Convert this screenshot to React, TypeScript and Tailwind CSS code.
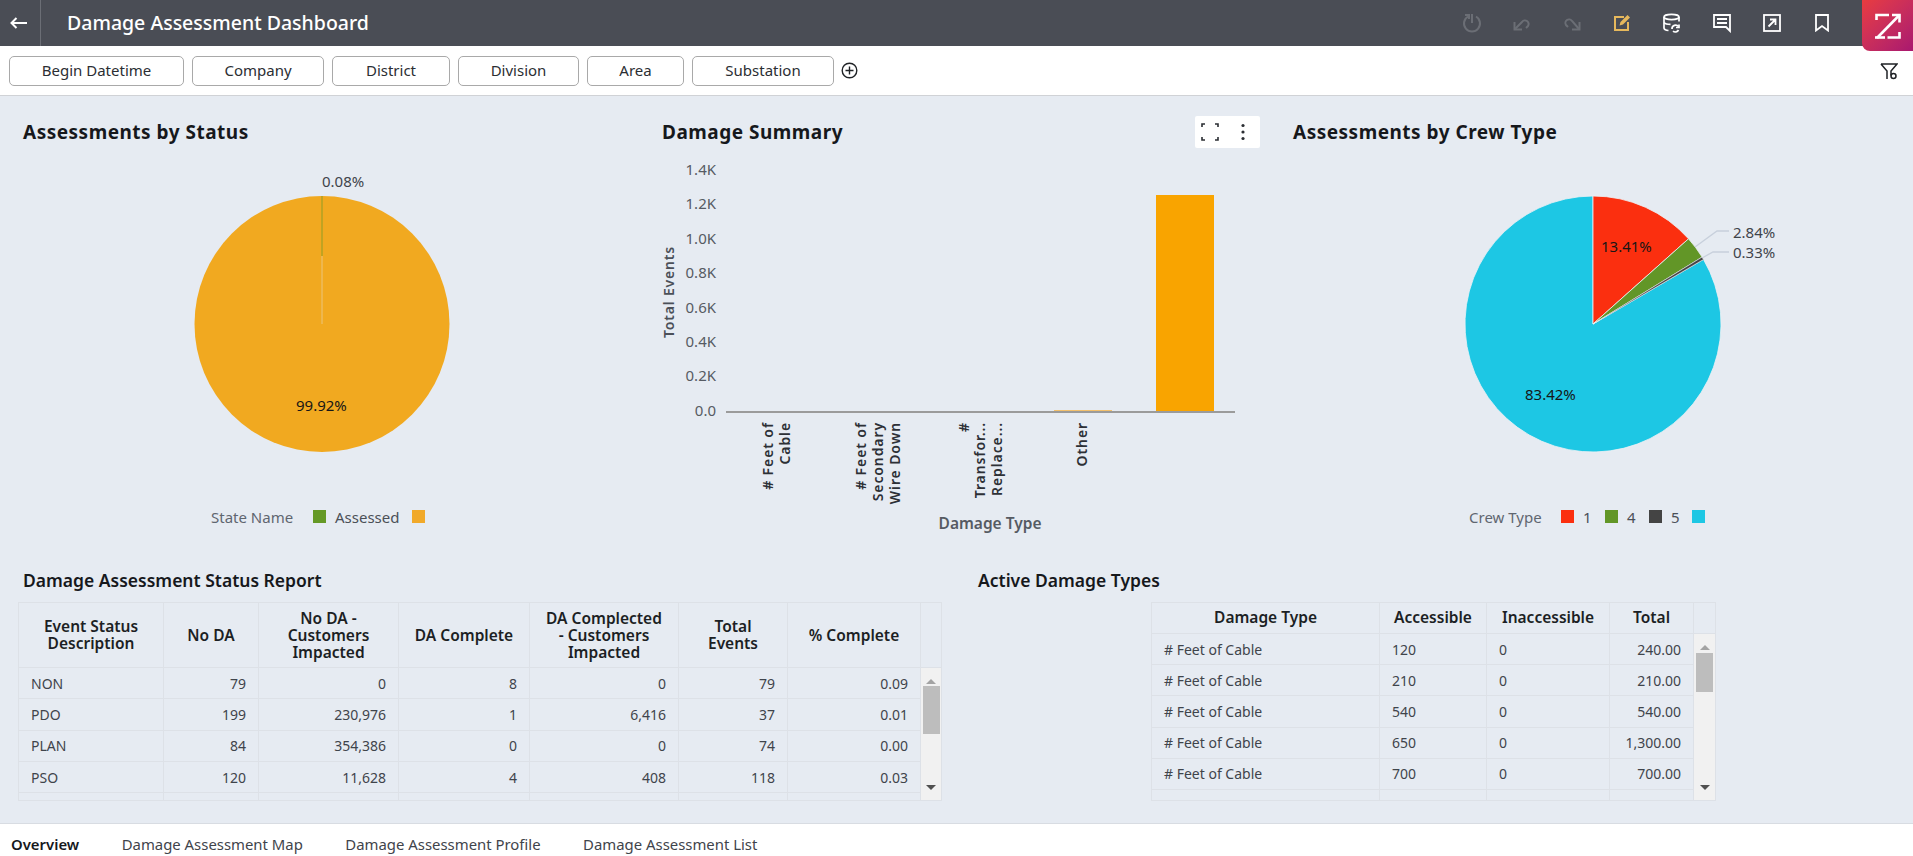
const filters = [
  { label: "Begin Datetime", width: "w-[175px]" },
  { label: "Company", width: "w-[132px]" },
  { label: "District", width: "w-[118px]" },
  { label: "Division", width: "w-[121px]" },
  { label: "Area", width: "w-[97px]" },
  { label: "Substation", width: "w-[142px]" },
];

const statusRows = [
  ["NON", "79", "0", "8", "0", "79", "0.09"],
  ["PDO", "199", "230,976", "1", "6,416", "37", "0.01"],
  ["PLAN", "84", "354,386", "0", "0", "74", "0.00"],
  ["PSO", "120", "11,628", "4", "408", "118", "0.03"],
  ["", "", "", "", "", "", ""],
];

const typeRows = [
  ["# Feet of Cable", "120", "0", "240.00"],
  ["# Feet of Cable", "210", "0", "210.00"],
  ["# Feet of Cable", "540", "0", "540.00"],
  ["# Feet of Cable", "650", "0", "1,300.00"],
  ["# Feet of Cable", "700", "0", "700.00"],
  ["", "", "", ""],
];

function HeaderIcons() {
  const cls = "w-[50px] flex items-center justify-center";
  return (
    <div className="flex items-center mr-[66px]">
      {/* power */}
      <div className={cls}>
        <svg width="20" height="20" viewBox="0 0 20 20" fill="none" stroke="#6b6e75" strokeWidth="2">
          <path d="M6 3.5a8 8 0 1 0 8 0" />
          <path d="M10 1v9" />
          <path d="M3 2h4v4" />
        </svg>
      </div>
      {/* undo */}
      <div className={cls}>
        <svg width="20" height="20" viewBox="0 0 20 20" fill="none" stroke="#6b6e75" strokeWidth="2">
          <path d="M3 16 L10 9 a3.5 3.5 0 0 1 6 4 l-2 2" />
          <path d="M2.5 9v7.5H10" />
        </svg>
      </div>
      {/* redo */}
      <div className={cls}>
        <svg width="20" height="20" viewBox="0 0 20 20" fill="none" stroke="#6b6e75" strokeWidth="2">
          <path d="M17 16 L10 8 a3.5 3.5 0 0 0 -6 4 l2 2" />
          <path d="M17.5 9v7.5H10" />
        </svg>
      </div>
      {/* edit */}
      <div className={cls}>
        <svg width="18" height="18" viewBox="0 0 18 18" fill="none" stroke="#e6b85c" strokeWidth="2">
          <path d="M11 3H2v13h13V8" />
          <path d="M6.5 11.5l1-3.5 7-7 2.5 2.5-7 7z" fill="#e6b85c" stroke="none" />
        </svg>
      </div>
      {/* database refresh */}
      <div className={cls}>
        <svg width="20" height="20" viewBox="0 0 20 20" fill="none" stroke="#ffffff" strokeWidth="1.7">
          <ellipse cx="9.5" cy="4" rx="7.5" ry="2.6" />
          <path d="M2 4v11c0 1.4 2.2 2.3 4.5 2.5" />
          <path d="M17 4v4.5" />
          <path d="M2 9.5c1 1.2 3.5 1.9 6.5 1.9" />
          <path d="M10 16a3.6 3.6 0 0 1 6.5-2.4" />
          <path d="M17 11.5v3h-3" />
          <path d="M11 18.2a3.6 3.6 0 0 0 5.5-1.2" />
        </svg>
      </div>
      {/* comment */}
      <div className={cls}>
        <svg width="20" height="20" viewBox="0 0 20 20" fill="none" stroke="#ffffff" strokeWidth="1.8">
          <path d="M2 2h16v16l-4-4H2z" />
          <path d="M5 6h10M5 10h10" />
        </svg>
      </div>
      {/* open in */}
      <div className={cls}>
        <svg width="18" height="18" viewBox="0 0 18 18" fill="none" stroke="#ffffff" strokeWidth="1.8">
          <rect x="1" y="1" width="16" height="16" />
          <path d="M5.5 12.5l7-7M7 5.5h5.5V11" />
        </svg>
      </div>
      {/* bookmark */}
      <div className={cls}>
        <svg width="14" height="18" viewBox="0 0 14 18" fill="none" stroke="#ffffff" strokeWidth="1.8">
          <path d="M1 1h12v15.5l-6-4.5-6 4.5z" />
        </svg>
      </div>
    </div>
  );
}

function Logo() {
  return (
    <div className="absolute top-0 right-0 w-[51px] h-[51px] rounded-bl-[8px] bg-gradient-to-br from-[#e93c3e] to-[#a9176f] flex items-center justify-center z-10">
      <svg width="26" height="26" viewBox="0 0 26 26" fill="none" stroke="#ffffff" strokeWidth="2.6">
        <path d="M1.5 7V2H14" />
        <path d="M17 2h7.5v7.5" />
        <path d="M2 25L24.5 2" />
        <path d="M0 24.5h10" />
        <path d="M12.5 24.5h12V19" />
      </svg>
    </div>
  );
}

function Legend({ x, y, label, items }: { x: number[]; y: number; label: string; items: { x: number; color: string; text?: string; textX?: number }[] }) {
  return (
    <g>
      <text x={x[0]} y={y + 6} fontSize="15" fill="#5f6670">{label}</text>
      {items.map((it) => (
        <g key={it.x}>
          <rect x={it.x} y={y - 7} width="13" height="13" fill={it.color} />
          {it.text && <text x={it.textX} y={y + 6} fontSize="15" fill="#4b5058">{it.text}</text>}
        </g>
      ))}
    </g>
  );
}

function StatusPie() {
  return (
    <svg className="block" width="640" height="412" viewBox="0 148 640 412" fontFamily="'Noto Sans', sans-serif">
      <text x="322" y="187" fontSize="15" fill="#3f444b">0.08%</text>
      <ellipse cx="322" cy="324" rx="127.5" ry="128" fill="#f1a920" />
      <path d="M322 324V256" stroke="#e6d9b8" strokeWidth="0.6" />
      <path d="M322 196v60" stroke="#659a28" strokeWidth="0.7" />
      <text x="296" y="411" fontSize="15" fill="#161616">99.92%</text>
      <Legend
        x={[211]}
        y={517}
        label="State Name"
        items={[
          { x: 313, color: "#659926", text: "Assessed", textX: 335 },
          { x: 412, color: "#f1a92a" },
        ]}
      />
    </svg>
  );
}

const yTicks = [
  ["1.4K", 175],
  ["1.2K", 209],
  ["1.0K", 244],
  ["0.8K", 278],
  ["0.6K", 313],
  ["0.4K", 347],
  ["0.2K", 381],
  ["0.0", 416],
] as const;

const xLabels: { x: number; text: string }[] = [
  { x: 773, text: "# Feet of" },
  { x: 790, text: "Cable" },
  { x: 866, text: "# Feet of" },
  { x: 883, text: "Secondary" },
  { x: 900, text: "Wire Down" },
  { x: 969, text: "#" },
  { x: 985, text: "Transfor..." },
  { x: 1002, text: "Replace..." },
  { x: 1087, text: "Other" },
];

function DamageBars() {
  return (
    <svg className="block" width="640" height="412" viewBox="640 148 640 412" fontFamily="'Noto Sans', sans-serif">
      {yTicks.map(([t, y]) => (
        <text key={t} x="716" y={y} fontSize="15" textAnchor="end" fill="#565b63">{t}</text>
      ))}
      <text transform="translate(674 292) rotate(-90)" fontSize="14" fontWeight="600" textAnchor="middle" fill="#4b5058" letterSpacing="0.8">Total Events</text>
      <rect x="1054" y="410" width="58" height="2" fill="#f3c06c" />
      <rect x="1156" y="195" width="58" height="216" fill="#f9a400" />
      <rect x="726" y="411" width="509" height="2" fill="#9b9b9b" />
      {xLabels.map((l) => (
        <text key={l.x} transform={`translate(${l.x} 422) rotate(-90)`} fontSize="14" fontWeight="600" textAnchor="end" fill="#2d3036" letterSpacing="0.9">{l.text}</text>
      ))}
      <text x="990" y="529" fontSize="15.5" fontWeight="600" textAnchor="middle" fill="#565b63">Damage Type</text>
    </svg>
  );
}

function CrewPie() {
  const cx = 1593;
  const cy = 324;
  const pt = (pct: number) => {
    const a = (pct / 100) * Math.PI * 2;
    return `${(cx + 128 * Math.sin(a)).toFixed(1)} ${(cy - 128 * Math.cos(a)).toFixed(1)}`;
  };
  const wedge = (from: number, to: number) =>
    `M${cx} ${cy}L${pt(from)}A128 128 0 ${to - from > 50 ? 1 : 0} 1 ${pt(to)}Z`;
  return (
    <svg className="block" width="633" height="412" viewBox="1280 148 633 412" fontFamily="'Noto Sans', sans-serif">
      <path d={wedge(16.58, 100)} fill="#1dc7e4" stroke="#eef1f5" strokeWidth="0.8" />
      <path d={wedge(0, 13.41)} fill="#fb2f0f" stroke="#eef1f5" strokeWidth="0.8" />
      <path d={wedge(13.41, 16.25)} fill="#629627" stroke="#eef1f5" strokeWidth="0.8" />
      <path d={wedge(16.25, 16.58)} fill="#444444" stroke="#eef1f5" strokeWidth="0.5" />
      <path d="M1695 247l22-16h12M1702 258l11-6h16" fill="none" stroke="#c8d0dc" strokeWidth="1.3" />
      <text x="1601" y="252" fontSize="15" fill="#161616">13.41%</text>
      <text x="1525" y="400" fontSize="15" fill="#161616">83.42%</text>
      <text x="1733" y="238" fontSize="15" fill="#3f444b">2.84%</text>
      <text x="1733" y="258" fontSize="15" fill="#3f444b">0.33%</text>
      <Legend
        x={[1469]}
        y={517}
        label="Crew Type"
        items={[
          { x: 1561, color: "#fb2f0f", text: "1", textX: 1583 },
          { x: 1605, color: "#629627", text: "4", textX: 1627 },
          { x: 1649, color: "#444444", text: "5", textX: 1671 },
          { x: 1692, color: "#1dc7e4" },
        ]}
      />
    </svg>
  );
}

function ScrollTrack({ thumbTop, thumbHeight }: { thumbTop: string; thumbHeight: string }) {
  return (
    <div className="h-full bg-[#f1f1f1] flex flex-col items-center">
      <div className="mt-[11px] w-0 h-0 border-x-[5px] border-x-transparent border-b-[5px] border-b-[#a3a3a3]" />
      <div className={`${thumbTop} ${thumbHeight} w-[17px] bg-[#bdbdbd]`} />
      <div className="mt-auto mb-[10px] w-0 h-0 border-x-[5px] border-x-transparent border-t-[5px] border-t-[#505050]" />
    </div>
  );
}

function StatusTable() {
  const heads = [
    "Event Status\nDescription",
    "No DA",
    "No DA -\nCustomers\nImpacted",
    "DA Complete",
    "DA Complected\n- Customers\nImpacted",
    "Total\nEvents",
    "% Complete",
  ];
  const cols = ["w-[145px]", "w-[95px]", "w-[140px]", "w-[131px]", "w-[149px]", "w-[109px]", "w-[133px]"];
  return (
    <div className="ml-[18px] w-[924px] h-[199px] border border-[#dde1e7] overflow-hidden flex flex-col">
      <div className="flex h-[65px] shrink-0 border-b border-[#dde1e7]">
        {heads.map((h, i) => (
          <div key={h} className={`${cols[i]} shrink-0 border-r border-[#dde1e7] flex items-center justify-center text-center whitespace-pre-line text-[15.5px] leading-[17px] font-semibold text-[#1c1f24]`}>
            {h}
          </div>
        ))}
        <div className="flex-1" />
      </div>
      <div className="flex flex-1 min-h-0">
        <div className="w-[902px] shrink-0">
          {statusRows.map((row, r) => (
            <div key={r} className="flex h-[31.3px] border-b border-[#dde1e7]">
              {row.map((c, i) => (
                <div key={i} className={`${cols[i]} shrink-0 border-r border-[#dde1e7] flex items-center px-[12px] text-[14px] text-[#3f444b] ${i === 0 ? "justify-start" : "justify-end"}`}>
                  {c}
                </div>
              ))}
            </div>
          ))}
        </div>
        <div className="flex-1 min-w-0">
          <ScrollTrack thumbTop="mt-[2px]" thumbHeight="h-[48px]" />
        </div>
      </div>
    </div>
  );
}

function TypesTable() {
  const heads = ["Damage Type", "Accessible", "Inaccessible", "Total"];
  const cols = ["w-[228px]", "w-[107px]", "w-[123px]", "w-[84px]"];
  return (
    <div className="ml-[173px] w-[565px] h-[199px] border border-[#dde1e7] overflow-hidden flex flex-col">
      <div className="flex h-[31px] shrink-0 border-b border-[#dde1e7]">
        {heads.map((h, i) => (
          <div key={h} className={`${cols[i]} shrink-0 border-r border-[#dde1e7] flex items-center justify-center text-[15.5px] font-semibold text-[#1c1f24]`}>
            {h}
          </div>
        ))}
        <div className="flex-1" />
      </div>
      <div className="flex flex-1 min-h-0">
        <div className="w-[542px] shrink-0">
          {typeRows.map((row, r) => (
            <div key={r} className="flex h-[31.2px] border-b border-[#dde1e7]">
              {row.map((c, i) => (
                <div key={i} className={`${cols[i]} shrink-0 border-r border-[#dde1e7] flex items-center px-[12px] text-[14px] text-[#3f444b] ${i === 3 ? "justify-end" : "justify-start"}`}>
                  {c}
                </div>
              ))}
            </div>
          ))}
        </div>
        <div className="flex-1 min-w-0">
          <ScrollTrack thumbTop="mt-[3px]" thumbHeight="h-[39px]" />
        </div>
      </div>
    </div>
  );
}

export default function App() {
  return (
    <div className="relative h-screen w-full flex flex-col overflow-hidden bg-white font-['Noto_Sans',sans-serif]">
      {/* top bar */}
      <header className="h-[46px] shrink-0 bg-[#4a4d55] flex items-center justify-between">
        <div className="flex items-center h-full">
          <div className="w-[41px] h-full border-r border-[#6b6e75] flex items-center pl-[10px]">
            <svg width="17" height="12" viewBox="0 0 17 12" fill="none" stroke="#ffffff" strokeWidth="2">
              <path d="M1.5 6H17M6.5 1l-5 5 5 5" />
            </svg>
          </div>
          <h1 className="ml-[26px] text-[19.5px] font-medium text-white">Damage Assessment Dashboard</h1>
        </div>
        <HeaderIcons />
      </header>
      <Logo />

      {/* filter bar */}
      <div className="h-[50px] shrink-0 border-b border-[#d0d2d6] flex items-center pl-[9px] pr-[15px]">
        <div className="flex items-center gap-[8px]">
          {filters.map((f) => (
            <button key={f.label} className={`${f.width} h-[30px] border border-[#a9a9a9] rounded-[5px] bg-white text-[15px] text-[#2b2e33] text-center`}>
              {f.label}
            </button>
          ))}
        </div>
        <svg className="ml-[7px]" width="17" height="17" viewBox="0 0 17 17" fill="none" stroke="#1f2226" strokeWidth="1.4">
          <circle cx="8.5" cy="8.5" r="7.3" />
          <path d="M8.5 4.5v8M4.5 8.5h8" />
        </svg>
        <svg className="ml-auto" width="18" height="18" viewBox="0 0 18 18" fill="none" stroke="#1f2226" strokeWidth="1.5">
          <path d="M1 2h16l-6 7v4.5M1 2l6 7v8" />
          <circle cx="13.5" cy="14" r="2.5" />
        </svg>
      </div>

      {/* dashboard */}
      <main className="flex-1 min-h-0 bg-[#e6ebf2] border-b border-[#d8dce2]">
        <div className="grid grid-cols-[640px_640px_1fr] h-[464px]">
          <section>
            <div className="h-[52px] pt-[20px] pl-[23px] flex items-center">
              <h2 className="text-[19px] tracking-[0.5px] font-bold text-[#16181c]">Assessments by Status</h2>
            </div>
            <StatusPie />
          </section>
          <section>
            <div className="h-[52px] pt-[20px] pl-[22px] pr-[20px] flex items-center justify-between">
              <h2 className="text-[19px] tracking-[0.5px] font-bold text-[#16181c]">Damage Summary</h2>
              <div className="w-[65px] h-[32px] bg-white rounded-[2px] flex items-center pl-[6px] gap-[22px]">
                <svg width="18" height="18" viewBox="0 0 18 18" fill="none" stroke="#2b2e33" strokeWidth="1.6">
                  <path d="M1 4V1h3M14 1h3v3M17 14v3h-3M4 17H1v-3" />
                </svg>
                <svg width="4" height="18" viewBox="0 0 4 18" fill="#2b2e33">
                  <circle cx="2" cy="2.5" r="1.6" />
                  <circle cx="2" cy="9" r="1.6" />
                  <circle cx="2" cy="15.5" r="1.6" />
                </svg>
              </div>
            </div>
            <DamageBars />
          </section>
          <section>
            <div className="h-[52px] pt-[20px] pl-[13px] flex items-center">
              <h2 className="text-[19px] tracking-[0.5px] font-bold text-[#16181c]">Assessments by Crew Type</h2>
            </div>
            <CrewPie />
          </section>
        </div>

        <div className="grid grid-cols-[954px_1fr] pt-[8px]">
          <section>
            <h3 className="pl-[23px] h-[24px] mb-[10px] text-[17.5px] leading-[24px] font-semibold text-[#16181c]">Damage Assessment Status Report</h3>
            <StatusTable />
          </section>
          <section className="pl-[24px]">
            <h3 className="h-[24px] mb-[10px] text-[17.5px] leading-[24px] font-semibold text-[#16181c]">Active Damage Types</h3>
            <TypesTable />
          </section>
        </div>
      </main>

      {/* tabs */}
      <nav className="h-[32px] shrink-0 flex items-center pt-[8px] pl-[11px] gap-[42.5px] text-[14.9px] text-[#3f444b]">
        <span className="font-semibold text-[#16181c]">Overview</span>
        <span>Damage Assessment Map</span>
        <span>Damage Assessment Profile</span>
        <span>Damage Assessment List</span>
      </nav>
    </div>
  );
}
